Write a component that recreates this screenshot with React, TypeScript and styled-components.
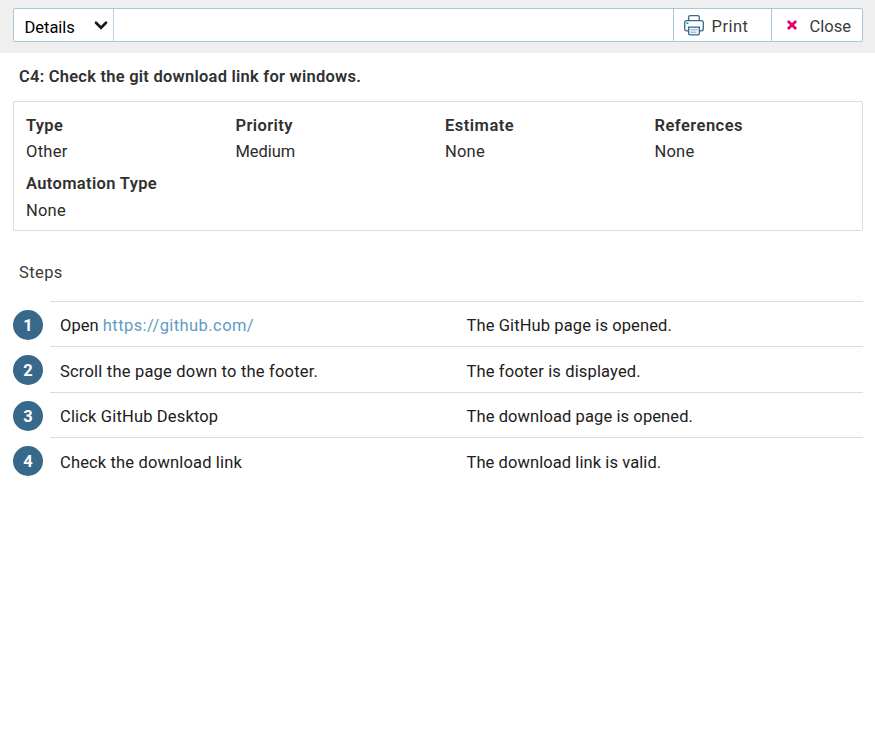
import React from "react";
import styled, { createGlobalStyle } from "styled-components";

const GlobalStyle = createGlobalStyle`
  * { box-sizing: border-box; }
  body {
    margin: 0;
    background: #fff;
    color: #2b2b2b;
    font: 400 16.5px/20px Roboto, "Liberation Sans", sans-serif;
  }
`;

const Tracked = styled.span<{ $ls: number }>`
  letter-spacing: ${(p) => p.$ls}px;
  white-space: nowrap;
`;

const Header = styled.header`
  height: 53px;
  padding: 8px 12px 0 13px;
  background: #efefef;
`;

const Toolbar = styled.div`
  display: flex;
  height: 34px;
  border: 1px solid #aac8dc;
  border-radius: 2px;
  background: #fff;
`;

const ViewSelect = styled.div`
  display: flex;
  justify-content: space-between;
  width: 100px;
  padding: 9px 5px 0 10.5px;
  border-right: 1px solid #bad3e2;
  color: #000;

  svg { margin-top: 2px; }
`;

const Spacer = styled.div`
  flex: 1;
`;

const ToolButton = styled.button<{ $width: number; $gap: number; $left: number }>`
  display: flex;
  gap: ${(p) => p.$gap}px;
  width: ${(p) => p.$width}px;
  padding: 8px 0 0 ${(p) => p.$left}px;
  border: 0;
  border-left: 1px solid #aac8dc;
  background: none;
  color: #3b3b3b;
  font: inherit;

  svg { flex: none; }
`;

const PrinterSvg = styled.svg`
  margin-top: -2px;
`;

const CrossSvg = styled.svg`
  margin-top: 2px;
`;

const Main = styled.main`
  padding: 14px 12px 0 13px;
`;

const Title = styled.h1`
  margin: 0 0 14px 6px;
  color: #303030;
  font: inherit;
  font-weight: 600;
`;

const Properties = styled.dl`
  display: grid;
  grid-template-columns: repeat(4, 209.5px);
  row-gap: 12px;
  height: 130px;
  margin: 0 0 32px;
  padding: 14px 0 0 12px;
  border: 1px solid #cfe0ea;
  border-radius: 2px;
  align-content: start;
`;

const Term = styled.dt`
  height: 26px;
  color: #303030;
  font-weight: 600;
`;

const Value = styled.dd<{ $drop?: boolean }>`
  margin: 0;
  padding-top: ${(p) => (p.$drop ? 1 : 0)}px;
`;

const SectionTitle = styled.h2`
  margin: 0 0 18px 6px;
  color: #3b3b3b;
  font: inherit;
`;

const Steps = styled.ol`
  margin: 0;
  padding: 0;
  list-style: none;
`;

const Step = styled.li<{ $tall?: boolean }>`
  display: flex;
  gap: 7px;
  height: ${(p) => (p.$tall ? 46 : 45)}px;
`;

const Badge = styled.span`
  display: grid;
  place-items: center;
  width: 30px;
  height: 30px;
  margin-top: 9px;
  padding-top: 2px;
  border-radius: 50%;
  background: #38698b;
  color: #fff;
  font-weight: 700;
`;

const StepBody = styled.div<{ $top: number }>`
  display: grid;
  grid-template-columns: 406.5px 1fr;
  flex: 1;
  padding: ${(p) => p.$top}px 0 0 10px;
  border-top: 1px solid #cfe0ea;
  color: #202020;
`;

const Link = styled.a`
  color: #5f9bc5;
  text-decoration: none;
`;

const properties = [
  { name: "Type", nameLs: 0.3, value: "Other", valueLs: 0.3 },
  { name: "Priority", nameLs: 0.4, value: "Medium", valueLs: -0.05 },
  { name: "Estimate", nameLs: 0.5, value: "None", valueLs: 0.2 },
  { name: "References", nameLs: 0.47, value: "None", valueLs: 0.2 },
  { name: "Automation Type", nameLs: 0.34, value: "None", valueLs: 0.2, drop: true },
];

const steps = [
  { action: "Open ", actionLs: 0.05, link: "https://github.com/", result: "The GitHub page is opened.", resultLs: 0.11, top: 14 },
  { action: "Scroll the page down to the footer.", actionLs: 0.2, result: "The footer is displayed.", resultLs: 0.14, top: 15, tall: true },
  { action: "Click GitHub Desktop", actionLs: 0.16, result: "The download page is opened.", resultLs: 0.1, top: 14 },
  { action: "Check the download link", actionLs: 0.15, result: "The download link is valid.", resultLs: 0.08, top: 15 },
];

const ChevronIcon = () => (
  <svg width="14" height="12" viewBox="0 0 14 12" fill="none">
    <path d="M2 2.8 7 7.8 12 2.8" stroke="#1b1b1b" strokeWidth="2.7" strokeLinecap="round" />
  </svg>
);

const PrinterIcon = () => (
  <PrinterSvg width="20" height="21" viewBox="0 0 20 21" fill="none" stroke="#38698b" strokeWidth="1.3">
    <path d="M4.7 5.6V2.2q0-1.5 1.5-1.5h7.6q1.5 0 1.5 1.5v3.4" />
    <path d="M4.6 15.8H2.7q-2 0-2-2V7.7q0-2 2-2h14.6q2 0 2 2v6.1q0 2-2 2h-1.9" />
    <path d="M4.6 12.2h10.8v6.3q0 1.4-1.4 1.4H6q-1.4 0-1.4-1.4z" fill="#e8f2f8" />
    <path d="M6.5 14.7h7M6.5 17.2h5.6" stroke="#8fb2ca" strokeWidth="1.1" />
    <path d="M2.4 8.2h2" stroke="#19a974" strokeWidth="1.7" />
  </PrinterSvg>
);

const CrossIcon = () => (
  <CrossSvg width="12" height="12" viewBox="0 0 12 12">
    <path d="M1.9 1.9 10.1 10.1M10.1 1.9 1.9 10.1" stroke="#e5006f" strokeWidth="2.8" />
  </CrossSvg>
);

export default function App() {
  return (
    <>
      <GlobalStyle />
      <Header>
        <Toolbar>
          <ViewSelect>
            <Tracked $ls={-0.03}>Details</Tracked>
            <ChevronIcon />
          </ViewSelect>
          <Spacer />
          <ToolButton $width={98} $gap={7.5} $left={10}>
            <PrinterIcon />
            <Tracked $ls={0.5}>Print</Tracked>
          </ToolButton>
          <ToolButton $width={91} $gap={11.5} $left={14}>
            <CrossIcon />
            <Tracked $ls={0}>Close</Tracked>
          </ToolButton>
        </Toolbar>
      </Header>
      <Main>
        <Title>
          <Tracked $ls={0.24}>C4: Check the git download link for windows.</Tracked>
        </Title>
        <Properties>
          {properties.map((p) => (
            <div key={p.name}>
              <Term><Tracked $ls={p.nameLs}>{p.name}</Tracked></Term>
              <Value $drop={p.drop}><Tracked $ls={p.valueLs}>{p.value}</Tracked></Value>
            </div>
          ))}
        </Properties>
        <SectionTitle>
          <Tracked $ls={0.4}>Steps</Tracked>
        </SectionTitle>
        <Steps>
          {steps.map((s, i) => (
            <Step key={s.action} $tall={s.tall}>
              <Badge>{i + 1}</Badge>
              <StepBody $top={s.top}>
                <div>
                  <Tracked $ls={s.actionLs}>{s.action}</Tracked>
                  {s.link && <Link><Tracked $ls={0.42}>{s.link}</Tracked></Link>}
                </div>
                <Tracked $ls={s.resultLs}>{s.result}</Tracked>
              </StepBody>
            </Step>
          ))}
        </Steps>
      </Main>
    </>
  );
}
